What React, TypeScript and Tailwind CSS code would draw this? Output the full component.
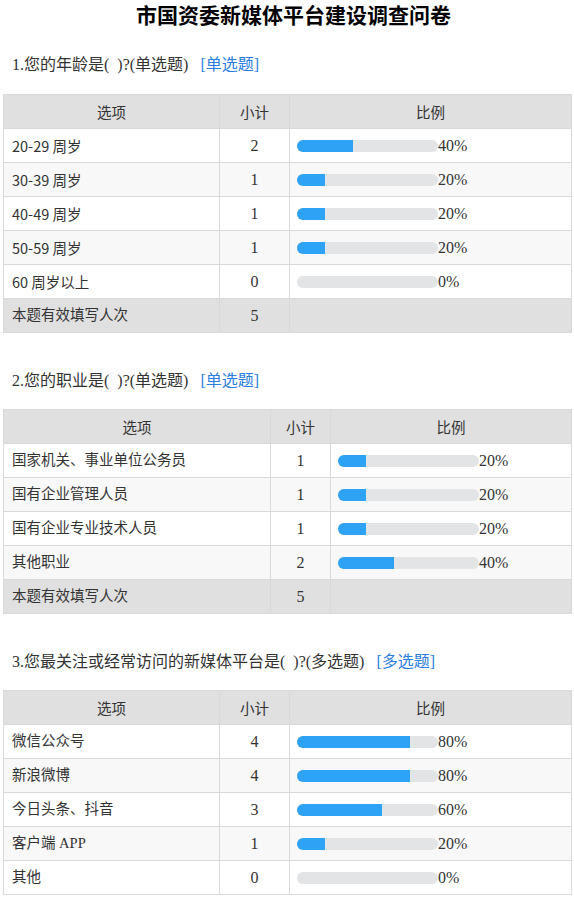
type Row = { label: string; count: number; pct: number }

type Question = {
  title: string
  kind: string
  total: number
  cols: [string, string]
  sansLabels?: boolean
  rows: Row[]
}

const questions: Question[] = [
  {
    title: "1.您的年龄是(  )?(单选题)",
    kind: "[单选题]",
    total: 5,
    cols: ["w-[216px]", "w-[70px]"],
    sansLabels: true,
    rows: [
      { label: "20-29 周岁", count: 2, pct: 40 },
      { label: "30-39 周岁", count: 1, pct: 20 },
      { label: "40-49 周岁", count: 1, pct: 20 },
      { label: "50-59 周岁", count: 1, pct: 20 },
      { label: "60 周岁以上", count: 0, pct: 0 },
    ],
  },
  {
    title: "2.您的职业是(  )?(单选题)",
    kind: "[单选题]",
    total: 5,
    cols: ["w-[267px]", "w-[60px]"],
    rows: [
      { label: "国家机关、事业单位公务员", count: 1, pct: 20 },
      { label: "国有企业管理人员", count: 1, pct: 20 },
      { label: "国有企业专业技术人员", count: 1, pct: 20 },
      { label: "其他职业", count: 2, pct: 40 },
    ],
  },
  {
    title: "3.您最关注或经常访问的新媒体平台是(  )?(多选题)",
    kind: "[多选题]",
    total: 0,
    cols: ["w-[216px]", "w-[70px]"],
    rows: [
      { label: "微信公众号", count: 4, pct: 80 },
      { label: "新浪微博", count: 4, pct: 80 },
      { label: "今日头条、抖音", count: 3, pct: 60 },
      { label: "客户端 APP", count: 1, pct: 20 },
      { label: "其他", count: 0, pct: 0 },
    ],
  },
]

const serif = "font-['Liberation_Serif','Noto_Sans_CJK_SC',serif]"
const sans = "font-['Noto_Sans_CJK_SC','Liberation_Sans',sans-serif]"

function Bar({ pct }: { pct: number }) {
  return (
    <div className="flex items-center">
      <div className="h-3 w-[141px] rounded-full bg-[#e3e4e6] overflow-hidden">
        <div className="h-full bg-[#2ea3f6]" style={{ width: `${pct}%` }}></div>
      </div>
      <span className="text-[16px] leading-none">{pct}%</span>
    </div>
  )
}

function Section({ q, first }: { q: Question; first: boolean }) {
  return (
    <div className={first ? "mt-[27px]" : "mt-[38px]"}>
      <p className="px-3 h-5 leading-5 text-[16px] text-[#333] whitespace-pre">
        {q.title}
        <span className="ml-3 text-[#2b7de0]">{q.kind}</span>
      </p>
      <table className={`${first ? "mt-[19px]" : "mt-[18px]"} mx-[3px] w-[569px] border-collapse table-fixed text-[14.5px] text-[#333]`}>
        <thead>
          <tr className="bg-[#e0e0e0] h-[34px]">
            <th className={`${q.cols[0]} border border-[#d9d9d9] font-normal ${sans}`}>选项</th>
            <th className={`${q.cols[1]} border border-[#d9d9d9] font-normal ${sans}`}>小计</th>
            <th className={`border border-[#d9d9d9] font-normal ${sans}`}>比例</th>
          </tr>
        </thead>
        <tbody>
          {q.rows.map((r, i) => (
            <tr key={i} className={`h-[34px] ${i % 2 === 1 ? "bg-[#f8f8f8]" : "bg-white"}`}>
              <td className={`border border-[#d9d9d9] pl-2 ${q.sansLabels ? sans : ""}`}>{r.label}</td>
              <td className="border border-[#d9d9d9] text-center text-[16px]">{r.count}</td>
              <td className="border border-[#d9d9d9] pl-[7px]">
                <Bar pct={r.pct} />
              </td>
            </tr>
          ))}
          {q.total > 0 && (
            <tr className="h-[34px] bg-[#e0e0e0]">
              <td className="border border-[#d9d9d9] pl-2">本题有效填写人次</td>
              <td className="border border-[#d9d9d9] text-center text-[16px]">{q.total}</td>
              <td className="border border-[#d9d9d9]"></td>
            </tr>
          )}
        </tbody>
      </table>
    </div>
  )
}

export default function App() {
  return (
    <div className={`w-[574px] bg-white pb-1 ${serif}`}>
      <h1 className={`h-7 leading-7 pl-[13px] text-center text-[21px] font-bold text-black ${sans}`}>
        市国资委新媒体平台建设调查问卷
      </h1>
      {questions.map((q, i) => (
        <Section key={i} q={q} first={i === 0} />
      ))}
    </div>
  )
}
